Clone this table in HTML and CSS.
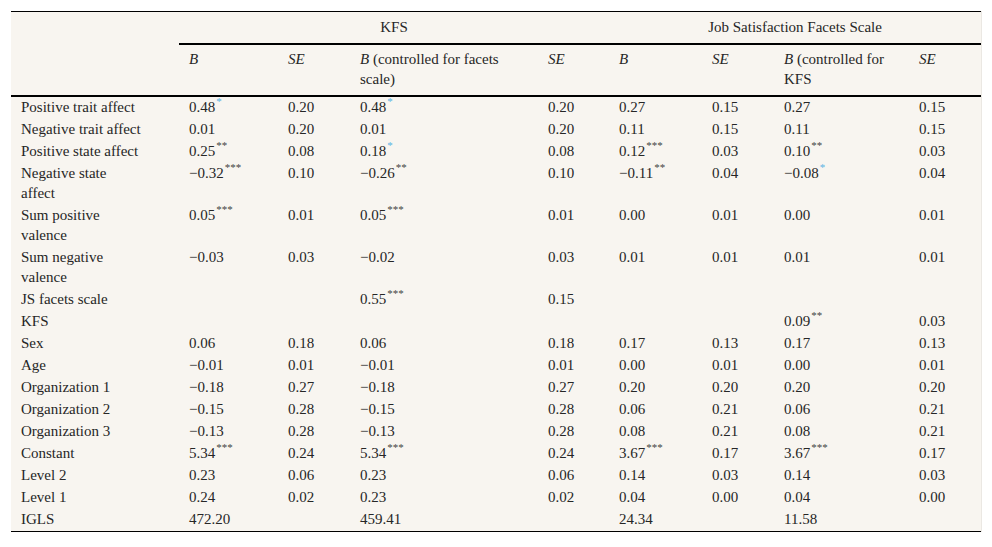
FILE: index.html
```html
<!DOCTYPE html>
<html lang="en">
<head>
<meta charset="utf-8">
<title>Table</title>
<link rel="stylesheet" href="styles.css">
</head>
<body>
<div class="page">
  <div class="table-wrap">
    <table class="results">
      <colgroup>
        <col class="c-label">
        <col class="c-b1">
        <col class="c-se1">
        <col class="c-b2">
        <col class="c-se2">
        <col class="c-b3">
        <col class="c-se3">
        <col class="c-b4">
        <col class="c-se4">
      </colgroup>
      <thead>
        <tr class="group-row">
          <th class="corner" rowspan="2"></th>
          <th class="group" colspan="4">KFS</th>
          <th class="group" colspan="4">Job Satisfaction Facets Scale</th>
        </tr>
        <tr class="sub-row">
          <th><i>B</i></th>
          <th><i>SE</i></th>
          <th><i>B</i> (controlled for facets<br>scale)</th>
          <th><i>SE</i></th>
          <th><i>B</i></th>
          <th><i>SE</i></th>
          <th><i>B</i> (controlled for<br>KFS</th>
          <th><i>SE</i></th>
        </tr>
      </thead>
      <tbody>
        <tr><td>Positive trait affect</td><td>0.48<sup class="blue">*</sup></td><td>0.20</td><td>0.48<sup class="blue">*</sup></td><td>0.20</td><td>0.27</td><td>0.15</td><td>0.27</td><td>0.15</td></tr>
        <tr><td>Negative trait affect</td><td>0.01</td><td>0.20</td><td>0.01</td><td>0.20</td><td>0.11</td><td>0.15</td><td>0.11</td><td>0.15</td></tr>
        <tr><td>Positive state affect</td><td>0.25<sup>**</sup></td><td>0.08</td><td>0.18<sup class="blue">*</sup></td><td>0.08</td><td>0.12<sup>***</sup></td><td>0.03</td><td>0.10<sup>**</sup></td><td>0.03</td></tr>
        <tr><td>Negative state<br>affect</td><td>&minus;0.32<sup>***</sup></td><td>0.10</td><td>&minus;0.26<sup>**</sup></td><td>0.10</td><td>&minus;0.11<sup>**</sup></td><td>0.04</td><td>&minus;0.08<sup class="blue">*</sup></td><td>0.04</td></tr>
        <tr><td>Sum positive<br>valence</td><td>0.05<sup>***</sup></td><td>0.01</td><td>0.05<sup>***</sup></td><td>0.01</td><td>0.00</td><td>0.01</td><td>0.00</td><td>0.01</td></tr>
        <tr><td>Sum negative<br>valence</td><td>&minus;0.03</td><td>0.03</td><td>&minus;0.02</td><td>0.03</td><td>0.01</td><td>0.01</td><td>0.01</td><td>0.01</td></tr>
        <tr><td>JS facets scale</td><td></td><td></td><td>0.55<sup>***</sup></td><td>0.15</td><td></td><td></td><td></td><td></td></tr>
        <tr><td>KFS</td><td></td><td></td><td></td><td></td><td></td><td></td><td>0.09<sup>**</sup></td><td>0.03</td></tr>
        <tr><td>Sex</td><td>0.06</td><td>0.18</td><td>0.06</td><td>0.18</td><td>0.17</td><td>0.13</td><td>0.17</td><td>0.13</td></tr>
        <tr><td>Age</td><td>&minus;0.01</td><td>0.01</td><td>&minus;0.01</td><td>0.01</td><td>0.00</td><td>0.01</td><td>0.00</td><td>0.01</td></tr>
        <tr><td>Organization 1</td><td>&minus;0.18</td><td>0.27</td><td>&minus;0.18</td><td>0.27</td><td>0.20</td><td>0.20</td><td>0.20</td><td>0.20</td></tr>
        <tr><td>Organization 2</td><td>&minus;0.15</td><td>0.28</td><td>&minus;0.15</td><td>0.28</td><td>0.06</td><td>0.21</td><td>0.06</td><td>0.21</td></tr>
        <tr><td>Organization 3</td><td>&minus;0.13</td><td>0.28</td><td>&minus;0.13</td><td>0.28</td><td>0.08</td><td>0.21</td><td>0.08</td><td>0.21</td></tr>
        <tr><td>Constant</td><td>5.34<sup>***</sup></td><td>0.24</td><td>5.34<sup>***</sup></td><td>0.24</td><td>3.67<sup>***</sup></td><td>0.17</td><td>3.67<sup>***</sup></td><td>0.17</td></tr>
        <tr><td>Level 2</td><td>0.23</td><td>0.06</td><td>0.23</td><td>0.06</td><td>0.14</td><td>0.03</td><td>0.14</td><td>0.03</td></tr>
        <tr><td>Level 1</td><td>0.24</td><td>0.02</td><td>0.23</td><td>0.02</td><td>0.04</td><td>0.00</td><td>0.04</td><td>0.00</td></tr>
        <tr><td>IGLS</td><td>472.20</td><td></td><td>459.41</td><td></td><td>24.34</td><td></td><td>11.58</td><td></td></tr>
      </tbody>
    </table>
  </div>
</div>
</body>
</html>
```

FILE: styles.css
```css
html, body {
  margin: 0;
  padding: 0;
  background: #ffffff;
  font-family: "Liberation Serif", "Times New Roman", serif;
}

.page {
  padding: 11px 0 0 11px;
}

.table-wrap {
  width: 970px;
  background: #f8f5f0;
  box-shadow: 1px 0 0 #ebe8e3;
}

.results {
  width: 970px;
  table-layout: fixed;
  border-collapse: collapse;
  font-family: "Liberation Serif", "Times New Roman", serif;
  font-size: 15px;
  line-height: 20px;
  color: #262626;
  border-top: 1px solid #000000;
  border-bottom: 1px solid #000000;
}

.c-label { width: 168px; }
.c-b1 { width: 99px; }
.c-se1 { width: 72px; }
.c-b2 { width: 188px; }
.c-se2 { width: 71px; }
.c-b3 { width: 93px; }
.c-se3 { width: 72px; }
.c-b4 { width: 135px; }
.c-se4 { width: 72px; }

.results th {
  font-weight: normal;
  text-align: left;
  vertical-align: top;
  padding: 4px 10px 6px 10px;
}

.group-row th {
  padding: 5px 10px 6px 10px;
}

.group-row .group {
  text-align: center;
  border-bottom: 2px solid #000000;
}

.corner,
.sub-row th {
  border-bottom: 2px solid #000000;
}

.results td {
  padding: 0 10px 2px 10px;
  vertical-align: top;
  text-align: left;
  white-space: nowrap;
}

.results i {
  font-style: italic;
}

.results sup {
  font-size: 11px;
  line-height: 0;
  vertical-align: 7px;
  color: #444444;
  margin-left: 1px;
}

.results sup.blue {
  color: #5ab3e3;
}
```
